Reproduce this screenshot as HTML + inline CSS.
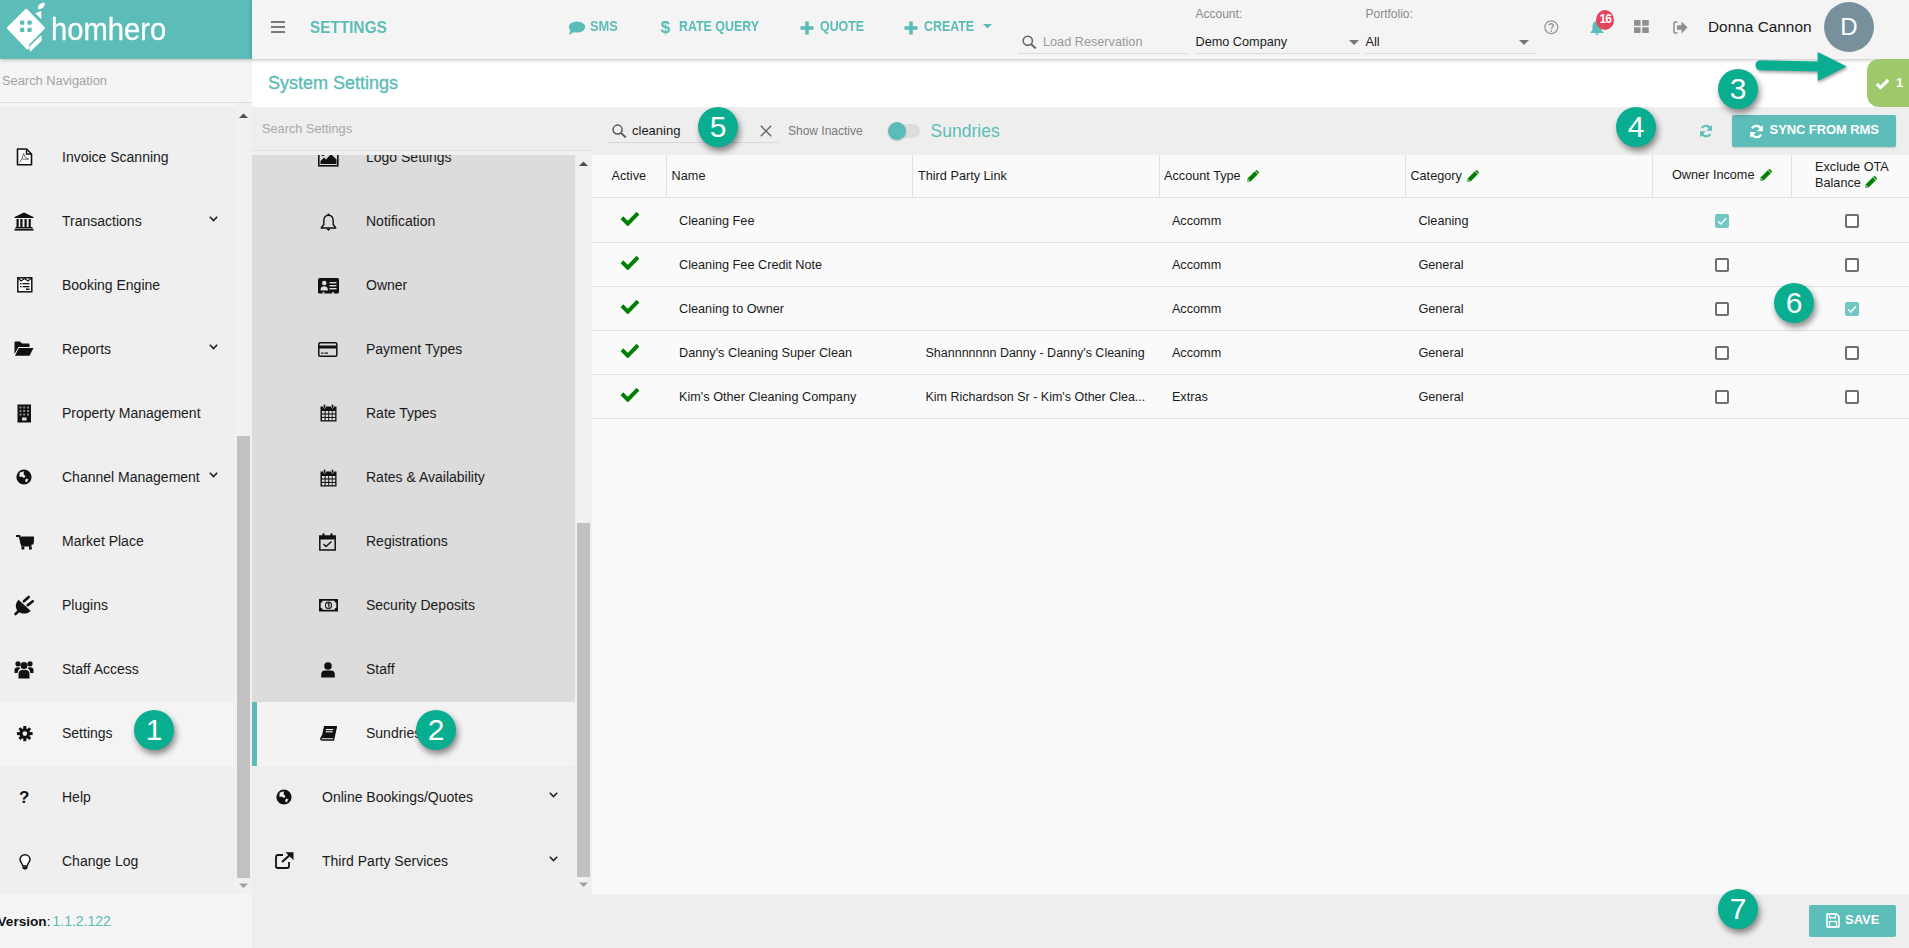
<!DOCTYPE html>
<html><head><meta charset="utf-8">
<style>
*{box-sizing:border-box;margin:0;padding:0}
html,body{width:1909px;height:948px;overflow:hidden;background:#fafafa;font-family:"Liberation Sans",sans-serif;color:#212121}
.a{position:absolute}
.t{position:absolute;white-space:nowrap;line-height:1.15}
svg{position:absolute;display:block}
#logo{left:0;top:0;width:252px;height:59px;background:#5cbcb8;z-index:3;box-shadow:0 1px 4px rgba(0,0,0,.25)}
#topbar{left:252px;top:0;width:1657px;height:59px;background:#f4f4f4;box-shadow:0 1px 4px rgba(0,0,0,.25);z-index:3}
#lsearch{left:0;top:59px;width:252px;height:44px;background:#f5f5f5;border-bottom:1px solid #dedede;z-index:1}
#lnav{left:0;top:103px;width:252px;height:791px;background:#efefef;overflow:hidden}
#lfoot{left:0;top:894px;width:252px;height:54px;background:#f5f5f5}
#phead{left:252px;top:59px;width:1657px;height:48px;background:#fff}
#ssearch{left:252px;top:107px;width:340px;height:44px;background:#eeeeee;border-bottom:1px solid #e0e0e0}
#slist{left:252px;top:151px;width:340px;height:743px;background:#f0f0f0;overflow:hidden}
#toolbar{left:592px;top:107px;width:1317px;height:48px;background:#eeeeee}
#table{left:592px;top:155px;width:1317px;height:739px;background:#fafafa}
#foot{left:252px;top:894px;width:1657px;height:54px;background:#eeeeee}
.nav{position:absolute;left:0;width:235px;height:64px}
.nav .t{left:62px;font-size:14px;top:24px;color:#1a1a1a}
.callout{position:absolute;width:40px;height:40px;border-radius:50%;background:#09ad8f;color:#fff;font-size:30px;text-align:center;line-height:40px;box-shadow:2px 4px 6px rgba(0,0,0,.45);z-index:10}
.tb{top:18.3px;font-size:14.2px;font-weight:700;color:#5cbcb8;transform:scaleX(0.875);transform-origin:0 0}
</style></head><body>
<div id="logo" class="a">
<svg style="left:0;top:0" width="60" height="59" viewBox="0 0 60 59">
<polygon points="8.5,28 26.2,10.3 43.3,28 27.6,44.3 27.6,48" fill="#fff" stroke="#fff" stroke-width="3" stroke-linejoin="round"/>
<rect x="20" y="20.5" width="4.3" height="4.2" rx="1" fill="#5cbcb8"/><rect x="27.4" y="20.5" width="4.3" height="4.2" rx="1" fill="#5cbcb8"/>
<rect x="20" y="27.7" width="4.3" height="4.2" rx="1" fill="#5cbcb8"/><rect x="27.4" y="27.7" width="4.3" height="4.2" rx="1" fill="#5cbcb8"/>
<polygon points="30,47 40.8,36.5 40.8,40.5 30.5,50.5" fill="#fff" stroke="#fff" stroke-width="1.5" stroke-linejoin="round"/>
<path d="M38,9.3 C37.5,5 40,2.8 44.8,2.8 C44.8,7 42.5,9.3 38,9.3Z" fill="#fff"/>
<polygon points="35.3,13.2 41.3,11 41.3,19.3" fill="#fff"/>
</svg>
<div class="t" style="left:51px;top:10.7px;font-size:32px;color:#fff;transform:scaleX(0.912);transform-origin:0 0;-webkit-text-stroke:0.3px #fff">homhero</div>
</div>
<div id="topbar" class="a">
<svg style="left:19px;top:20px" width="14" height="14" viewBox="0 0 14 14"><rect x="0" y="1" width="14" height="2" fill="#7a7a7a"/><rect x="0" y="6" width="14" height="2" fill="#7a7a7a"/><rect x="0" y="11" width="14" height="2" fill="#7a7a7a"/></svg>
<div class="t" style="left:58px;top:17.8px;font-size:16.5px;font-weight:700;color:#5cbcb8;transform:scaleX(0.933);transform-origin:0 0">SETTINGS</div>
<svg style="left:316px;top:21px" width="18" height="15" viewBox="0 0 18 15"><ellipse cx="9" cy="6" rx="8.2" ry="5.6" fill="#5cbcb8"/><path d="M2.5,9 L0.8,14 L7,10.5Z" fill="#5cbcb8"/></svg>
<div class="t tb" style="left:338px;transform:scaleX(0.91)">SMS</div>
<div class="t" style="left:408.5px;top:17.5px;font-size:17px;font-weight:700;color:#5cbcb8">$</div>
<div class="t tb" style="left:426.5px">RATE QUERY</div>
<svg style="left:547.5px;top:21px" width="14" height="14" viewBox="0 0 14 14"><rect x="5.2" y="0.5" width="3.6" height="13" fill="#5cbcb8"/><rect x="0.5" y="5.2" width="13" height="3.6" fill="#5cbcb8"/></svg>
<div class="t tb" style="left:567.5px">QUOTE</div>
<svg style="left:651.5px;top:21px" width="14" height="14" viewBox="0 0 14 14"><rect x="5.2" y="0.5" width="3.6" height="13" fill="#5cbcb8"/><rect x="0.5" y="5.2" width="13" height="3.6" fill="#5cbcb8"/></svg>
<div class="t tb" style="left:672px">CREATE</div>
<svg style="left:731px;top:24px" width="9" height="5" viewBox="0 0 9 5"><polygon points="0,0 9,0 4.5,4.5" fill="#5cbcb8"/></svg>
<svg style="left:770px;top:35px" width="15" height="14" viewBox="0 0 15 14"><circle cx="5.8" cy="5.8" r="4.6" fill="none" stroke="#666" stroke-width="1.6"/><line x1="9.2" y1="9.2" x2="13.8" y2="13.4" stroke="#666" stroke-width="2"/></svg>
<div class="t" style="left:791px;top:35px;font-size:12.7px;color:#999">Load Reservation</div>
<div class="a" style="left:766px;top:53px;width:170px;height:1px;background:#dcdcdc"></div>
<div class="t" style="left:943.5px;top:8px;font-size:12px;color:#8a8a8a">Account:</div>
<div class="t" style="left:943.5px;top:35px;font-size:12.7px;color:#1a1a1a">Demo Company</div>
<svg style="left:1097px;top:40px" width="10" height="5" viewBox="0 0 10 5"><polygon points="0,0 10,0 5,5" fill="#777"/></svg>
<div class="a" style="left:943px;top:53px;width:164px;height:1px;background:#dcdcdc"></div>
<div class="t" style="left:1113.5px;top:8px;font-size:12px;color:#8a8a8a">Portfolio:</div>
<div class="t" style="left:1113.5px;top:35px;font-size:12.7px;color:#1a1a1a">All</div>
<svg style="left:1267px;top:40px" width="10" height="5" viewBox="0 0 10 5"><polygon points="0,0 10,0 5,5" fill="#777"/></svg>
<div class="a" style="left:1113px;top:53px;width:170px;height:1px;background:#dcdcdc"></div>
<svg style="left:1292px;top:20px" width="15" height="15" viewBox="0 0 15 15"><circle cx="7.3" cy="7.2" r="6.4" fill="none" stroke="#9a9a9a" stroke-width="1.3"/><path d="M5.2,5.6 C5.2,3.2 9.4,3.2 9.4,5.6 C9.4,7.2 7.3,7.3 7.3,9" fill="none" stroke="#9a9a9a" stroke-width="1.5"/><circle cx="7.3" cy="11" r="0.9" fill="#9a9a9a"/></svg>
<svg style="left:1337px;top:20px" width="16" height="16" viewBox="0 0 16 16"><path d="M8,1 C11,1 12.5,3.5 12.5,6.5 L12.5,10 L15,13 L1,13 L3.5,10 L3.5,6.5 C3.5,3.5 5,1 8,1Z" fill="#5cbcb8"/><path d="M6,13.5 Q8,16.5 10,13.5Z" fill="#5cbcb8"/></svg>
<div class="a" style="left:1344px;top:10px;width:18px;height:20px;border-radius:50%;background:#e2445c"></div>
<div class="t" style="left:1347.5px;top:13px;font-size:12px;font-weight:700;color:#fff;letter-spacing:-0.8px">16</div>
<svg style="left:1382px;top:20px" width="15" height="13" viewBox="0 0 15 13"><rect x="0" y="0" width="6.6" height="5.8" rx="0.8" fill="#8f8f8f"/><rect x="8.2" y="0" width="6.6" height="5.8" rx="0.8" fill="#8f8f8f"/><rect x="0" y="7.2" width="6.6" height="5.8" rx="0.8" fill="#8f8f8f"/><rect x="8.2" y="7.2" width="6.6" height="5.8" rx="0.8" fill="#8f8f8f"/></svg>
<svg style="left:1420.5px;top:21px" width="15" height="13" viewBox="0 0 15 13"><path d="M4.5,1 L2,1 Q1,1 1,2 L1,11 Q1,12 2,12 L4.5,12" fill="none" stroke="#8f8f8f" stroke-width="1.5"/><path d="M4,4.3 L8.5,4.3 L8.5,0.6 L14.5,6.5 L8.5,12.4 L8.5,8.7 L4,8.7Z" fill="#8f8f8f"/></svg>
<div class="t" style="left:1456px;top:17.8px;font-size:15.4px;color:#1a1a1a">Donna Cannon</div>
<div class="a" style="left:1572px;top:2px;width:50px;height:50px;border-radius:50%;background:#78909c"></div>
<div class="t" style="left:1572px;width:50px;text-align:center;top:13px;font-size:24px;color:#fff">D</div>
</div>
<div id="lsearch" class="a"><div class="t" style="left:2px;font-size:12.85px;color:#a3a3a3;top:14.5px">Search Navigation</div></div>
<div id="lnav" class="a"><div class="a" style="left:0;top:0;width:252px;height:4px;background:#f5f5f5"></div>
<div class="a" style="left:0;top:23px;width:235px;height:64px;"></div>
<svg style="left:16px;top:45px" width="17" height="18" viewBox="0 0 17 18"><path d="M1.5,1 L10.5,1 L15.5,6 L15.5,16.8 L1.5,16.8Z" fill="#fff" stroke="#111" stroke-width="1.6" stroke-linejoin="round"/><path d="M10.5,1 L10.5,6 L15.5,6" fill="none" stroke="#111" stroke-width="1.4"/><path d="M3.5,14.5 Q6.5,11 7.5,5.5 Q8.5,10 12.5,11.2 L6.5,11.2" fill="none" stroke="#444" stroke-width="0.8"/></svg>
<div class="t" style="left:62px;top:46.3px;font-size:14px;color:#1a1a1a">Invoice Scanning</div>
<div class="a" style="left:0;top:87px;width:235px;height:64px;"></div>
<svg style="left:13.5px;top:109px" width="20" height="19" viewBox="0 0 20 19"><polygon points="10,0.5 19.5,5 19.5,6 0.5,6 0.5,5" fill="#111"/><rect x="2.5" y="7" width="2.2" height="8" fill="#111"/><rect x="6.3" y="7" width="2.2" height="8" fill="#111"/><rect x="10.5" y="7" width="2.2" height="8" fill="#111"/><rect x="14.6" y="7" width="2.2" height="8" fill="#111"/><rect x="1.5" y="15" width="17" height="1.3" fill="#111"/><rect x="0.5" y="16.8" width="19" height="1.8" fill="#111"/></svg>
<div class="t" style="left:62px;top:110.3px;font-size:14px;color:#1a1a1a">Transactions</div>
<svg style="left:209px;top:113px" width="9" height="6" viewBox="0 0 9 6"><path d="M0.8,0.8 L4.5,4.6 L8.2,0.8" fill="none" stroke="#222" stroke-width="1.6"/></svg>
<div class="a" style="left:0;top:151px;width:235px;height:64px;"></div>
<svg style="left:16.5px;top:174px" width="16" height="16" viewBox="0 0 16 16"><rect x="0.8" y="0.8" width="14" height="14" fill="#fff" stroke="#111" stroke-width="1.5"/><path d="M1,1 L4,4 L7.5,1.5 L11,4 L14.5,1" fill="none" stroke="#111" stroke-width="1.1"/><rect x="3" y="6" width="1.5" height="1.3" fill="#111"/><rect x="5.5" y="6" width="7" height="1.3" fill="#111"/><rect x="3" y="9" width="1.5" height="1.3" fill="#111"/><rect x="5.5" y="9" width="7" height="1.3" fill="#111"/><rect x="9" y="11.5" width="3.5" height="1.5" fill="#111"/></svg>
<div class="t" style="left:62px;top:174.3px;font-size:14px;color:#1a1a1a">Booking Engine</div>
<div class="a" style="left:0;top:215px;width:235px;height:64px;"></div>
<svg style="left:14px;top:238px" width="20" height="16" viewBox="0 0 20 16"><path d="M0.5,13 L0.5,1.5 Q0.5,0.5 1.5,0.5 L6,0.5 L8,2.5 L14.5,2.5 Q15.5,2.5 15.5,3.5 L15.5,6 L4.5,6 L0.5,13Z" fill="#111"/><path d="M4.8,7 L19.5,7 L15.5,14.8 L1,14.8Z" fill="#111"/></svg>
<div class="t" style="left:62px;top:238.3px;font-size:14px;color:#1a1a1a">Reports</div>
<svg style="left:209px;top:241px" width="9" height="6" viewBox="0 0 9 6"><path d="M0.8,0.8 L4.5,4.6 L8.2,0.8" fill="none" stroke="#222" stroke-width="1.6"/></svg>
<div class="a" style="left:0;top:279px;width:235px;height:64px;"></div>
<svg style="left:16.5px;top:301px" width="15" height="19" viewBox="0 0 15 19"><rect x="0.5" y="0.5" width="13.5" height="18" fill="#111"/><g fill="#888"><rect x="2.5" y="2.5" width="2" height="2"/><rect x="6.2" y="2.5" width="2" height="2"/><rect x="10" y="2.5" width="2" height="2"/><rect x="2.5" y="6" width="2" height="2"/><rect x="6.2" y="6" width="2" height="2"/><rect x="10" y="6" width="2" height="2"/><rect x="2.5" y="9.5" width="2" height="2"/><rect x="6.2" y="9.5" width="2" height="2"/><rect x="10" y="9.5" width="2" height="2"/></g><rect x="5" y="13.5" width="4.5" height="3" fill="#ddd"/></svg>
<div class="t" style="left:62px;top:302.3px;font-size:14px;color:#1a1a1a">Property Management</div>
<div class="a" style="left:0;top:343px;width:235px;height:64px;"></div>
<svg style="left:16px;top:366px" width="16" height="16" viewBox="0 0 16 16"><circle cx="8" cy="8" r="7.6" fill="#111"/><path d="M3.5,4 Q5.5,2 8,2.5 L7.5,5 L9.5,7.5 L8,9 L5.5,7.5 L3.5,8 Z" fill="#eee"/><path d="M10,9.5 L12.5,10.5 L10.5,13.5 L9,12Z" fill="#eee"/></svg>
<div class="t" style="left:62px;top:366.3px;font-size:14px;color:#1a1a1a">Channel Management</div>
<svg style="left:209px;top:369px" width="9" height="6" viewBox="0 0 9 6"><path d="M0.8,0.8 L4.5,4.6 L8.2,0.8" fill="none" stroke="#222" stroke-width="1.6"/></svg>
<div class="a" style="left:0;top:407px;width:235px;height:64px;"></div>
<svg style="left:15.5px;top:432px" width="18" height="15" viewBox="0 0 18 15"><path d="M0,1 L3.5,1 L6,10.5 L15.5,10.5 M5,2.5 L17.5,2.5 L16.5,8.5 L5.5,8.5" fill="none" stroke="#111" stroke-width="1.8"/><rect x="4.5" y="2.5" width="13" height="6" fill="#111"/><rect x="5.5" y="11.5" width="2.8" height="3" fill="#111"/><rect x="13" y="11.5" width="2.8" height="3" fill="#111"/></svg>
<div class="t" style="left:62px;top:430.3px;font-size:14px;color:#1a1a1a">Market Place</div>
<div class="a" style="left:0;top:471px;width:235px;height:64px;"></div>
<svg style="left:10px;top:489px" width="30" height="26" viewBox="0 0 30 26"><path d="M8.5,7.8 L20.8,19 C17.5,22.2 11,22.5 8,19.2 C5,16 5,11.5 8.5,7.8Z" fill="#111"/><path d="M13.9,9.3 L18.8,5" stroke="#111" stroke-width="2.6" stroke-linecap="round"/><path d="M17.6,13.2 L22.8,9.3" stroke="#111" stroke-width="2.6" stroke-linecap="round"/><path d="M9.5,18.2 L5.5,22" stroke="#111" stroke-width="2.6" stroke-linecap="round"/></svg>
<div class="t" style="left:62px;top:494.3px;font-size:14px;color:#1a1a1a">Plugins</div>
<div class="a" style="left:0;top:535px;width:235px;height:64px;"></div>
<svg style="left:14px;top:557px" width="20" height="19" viewBox="0 0 20 19"><circle cx="10" cy="5.5" r="3.5" fill="#111"/><circle cx="4" cy="3.8" r="2.6" fill="#111"/><circle cx="16" cy="3.8" r="2.6" fill="#111"/><path d="M4.5,18.5 L4.5,14 Q4.5,9.8 10,9.8 Q15.5,9.8 15.5,14 L15.5,18.5Z" fill="#111"/><path d="M0.5,13 L0.5,10 Q0.5,7.2 4,7.2 Q5.5,7.2 6.5,8 Q3.8,9.5 3.6,13Z" fill="#111"/><path d="M19.5,13 L19.5,10 Q19.5,7.2 16,7.2 Q14.5,7.2 13.5,8 Q16.2,9.5 16.4,13Z" fill="#111"/></svg>
<div class="t" style="left:62px;top:558.3px;font-size:14px;color:#1a1a1a">Staff Access</div>
<div class="a" style="left:0;top:599px;width:235px;height:64px;background:#f4f4f4;"></div>
<svg style="left:16.5px;top:623px" width="16" height="16" viewBox="0 0 16 16"><g fill="#111"><circle cx="7.8" cy="7.6" r="5.3"/><rect x="6.3" y="0" width="3" height="15.2"/><rect x="0" y="6.1" width="15.6" height="3"/><rect x="6.3" y="0" width="3" height="15.2" transform="rotate(45 7.8 7.6)"/><rect x="6.3" y="0" width="3" height="15.2" transform="rotate(-45 7.8 7.6)"/></g><circle cx="7.8" cy="7.6" r="2.3" fill="#f4f4f4"/></svg>
<div class="t" style="left:62px;top:622.3px;font-size:14px;color:#1a1a1a">Settings</div>
<div class="a" style="left:0;top:663px;width:235px;height:64px;"></div>
<div class="t" style="left:19px;top:685px;font-size:17px;font-weight:700;color:#111">?</div>
<div class="t" style="left:62px;top:686.3px;font-size:14px;color:#1a1a1a">Help</div>
<div class="a" style="left:0;top:727px;width:235px;height:64px;"></div>
<svg style="left:18.5px;top:751px" width="12" height="17" viewBox="0 0 12 17"><path d="M6,0.8 C9,0.8 11,3 11,5.5 C11,8 8.5,9.5 8.2,12 L3.8,12 C3.5,9.5 1,8 1,5.5 C1,3 3,0.8 6,0.8Z" fill="#fff" stroke="#111" stroke-width="1.5"/><path d="M3.5,12.8 L8.5,12.8 L8.5,14.5 Q6,16.8 3.5,14.5Z" fill="#111"/></svg>
<div class="t" style="left:62px;top:750.3px;font-size:14px;color:#1a1a1a">Change Log</div>
<div class="a" style="left:235px;top:0;width:17px;height:790px;background:#f1f1f1"></div>
<div class="a" style="left:237px;top:333px;width:13px;height:442px;background:#c1c1c1"></div>
<svg style="left:239px;top:10px" width="9" height="6" viewBox="0 0 9 6"><polygon points="0,5 9,5 4.5,0.5" fill="#505050"/></svg>
<svg style="left:239px;top:780px" width="9" height="6" viewBox="0 0 9 6"><polygon points="0,0.5 9,0.5 4.5,5" fill="#a0a0a0"/></svg>
</div>
<div id="lfoot" class="a"><div class="t" style="left:-2.5px;top:19.8px;font-size:13.6px;font-weight:700;color:#111">Version<span style="font-weight:400">:</span></div><div class="t" style="left:52.5px;top:19.4px;font-size:14px;color:#5cbcb8">1.1.2.122</div></div>
<div id="phead" class="a"><div class="t" style="left:16px;top:14.2px;font-size:18px;color:#5cbcb8;-webkit-text-stroke:0.35px #5cbcb8">System Settings</div></div>
<div id="ssearch" class="a"><div class="t" style="left:10px;top:14.5px;font-size:12.75px;color:#a8a8a8">Search Settings</div></div>
<div id="slist" class="a"><div class="a" style="left:0;top:4px;width:340px;height:738px;overflow:hidden">
<div class="a" style="left:0;top:0;width:323px;height:547px;background:#dcdcdc"></div>
<div class="a" style="left:0;top:547px;width:323px;height:64px;background:#f3f3f3"></div>
<div class="a" style="left:0;top:547px;width:5px;height:64px;background:#5cbcb8"></div>
<div class="a" style="left:0;top:611px;width:323px;height:128px;background:#eeeeee"></div>
<svg style="left:66.0px;top:-5.5px" width="21" height="17" viewBox="0 0 21 17"><rect x="0.8" y="0.8" width="19" height="15" fill="none" stroke="#111" stroke-width="1.6"/><path d="M2.5,14 L2.5,11 L6,7.5 L8,9.5 L13,4 L18.5,9.5 L18.5,14Z" fill="#111"/><circle cx="5" cy="4.5" r="1.6" fill="#111"/></svg>
<div class="t" style="left:114px;top:-5.9px;font-size:14px;color:#1a1a1a">Logo Settings</div>
<svg style="left:67.5px;top:57.5px" width="17" height="19" viewBox="0 0 17 19"><path d="M8.5,2.2 C12,2.2 13.2,5 13.2,8 L13.2,11.5 L15.8,15 L1.2,15 L3.8,11.5 L3.8,8 C3.8,5 5,2.2 8.5,2.2Z" fill="none" stroke="#111" stroke-width="1.4" stroke-linejoin="round"/><circle cx="8.5" cy="1.5" r="1.1" fill="#111"/><path d="M6.8,16 Q8.5,18.5 10.2,16" fill="#111" stroke="#111" stroke-width="1"/></svg>
<div class="t" style="left:114px;top:58.1px;font-size:14px;color:#1a1a1a">Notification</div>
<svg style="left:65.5px;top:123.0px" width="21" height="16" viewBox="0 0 21 16"><rect x="0" y="0" width="21" height="15.5" rx="1.5" fill="#111"/><circle cx="6.2" cy="5" r="2.3" fill="#ddd"/><path d="M2.5,12.5 Q2.5,8.3 6.2,8.3 Q9.9,8.3 9.9,12.5Z" fill="#ddd"/><rect x="11.5" y="4" width="7" height="1.4" fill="#ddd"/><rect x="11.5" y="7" width="7" height="1.4" fill="#ddd"/><rect x="11.5" y="10" width="7" height="1.4" fill="#ddd"/><rect x="4.5" y="14.2" width="2" height="1.5" fill="#ddd"/><rect x="14" y="14.2" width="2" height="1.5" fill="#ddd"/></svg>
<div class="t" style="left:114px;top:122.1px;font-size:14px;color:#1a1a1a">Owner</div>
<svg style="left:66.4px;top:187.0px" width="20" height="15" viewBox="0 0 20 15"><rect x="0.8" y="0.8" width="18" height="13.4" rx="1.2" fill="none" stroke="#111" stroke-width="1.5"/><rect x="0.8" y="3.5" width="18" height="3" fill="#111"/><rect x="3" y="10.5" width="2.5" height="1.2" fill="#111"/><rect x="6.5" y="10.5" width="3.5" height="1.2" fill="#111"/></svg>
<div class="t" style="left:114px;top:186.1px;font-size:14px;color:#1a1a1a">Payment Types</div>
<svg style="left:67.5px;top:249.3px" width="17" height="18" viewBox="0 0 17 18"><rect x="0.5" y="2.5" width="16" height="15" fill="#111"/><rect x="3.5" y="0.3" width="2" height="4" rx="1" fill="#111" stroke="#ddd" stroke-width="0.6"/><rect x="11.5" y="0.3" width="2" height="4" rx="1" fill="#111" stroke="#ddd" stroke-width="0.6"/><g fill="#ddd"><rect x="2" y="7" width="2.6" height="2.4"/><rect x="5.6" y="7" width="2.6" height="2.4"/><rect x="9.2" y="7" width="2.6" height="2.4"/><rect x="12.6" y="7" width="2.6" height="2.4"/><rect x="2" y="10.5" width="2.6" height="2.4"/><rect x="5.6" y="10.5" width="2.6" height="2.4"/><rect x="9.2" y="10.5" width="2.6" height="2.4"/><rect x="12.6" y="10.5" width="2.6" height="2.4"/><rect x="2" y="14" width="2.6" height="2.2"/><rect x="5.6" y="14" width="2.6" height="2.2"/><rect x="9.2" y="14" width="2.6" height="2.2"/><rect x="12.6" y="14" width="2.6" height="2.2"/></g></svg>
<div class="t" style="left:114px;top:250.1px;font-size:14px;color:#1a1a1a">Rate Types</div>
<svg style="left:67.5px;top:314.0px" width="17" height="18" viewBox="0 0 17 18"><rect x="0.5" y="2.5" width="16" height="15" fill="#111"/><rect x="3.5" y="0.3" width="2" height="4" rx="1" fill="#111" stroke="#ddd" stroke-width="0.6"/><rect x="11.5" y="0.3" width="2" height="4" rx="1" fill="#111" stroke="#ddd" stroke-width="0.6"/><g fill="#ddd"><rect x="2" y="7" width="2.6" height="2.4"/><rect x="5.6" y="7" width="2.6" height="2.4"/><rect x="9.2" y="7" width="2.6" height="2.4"/><rect x="12.6" y="7" width="2.6" height="2.4"/><rect x="2" y="10.5" width="2.6" height="2.4"/><rect x="5.6" y="10.5" width="2.6" height="2.4"/><rect x="9.2" y="10.5" width="2.6" height="2.4"/><rect x="12.6" y="10.5" width="2.6" height="2.4"/><rect x="2" y="14" width="2.6" height="2.2"/><rect x="5.6" y="14" width="2.6" height="2.2"/><rect x="9.2" y="14" width="2.6" height="2.2"/><rect x="12.6" y="14" width="2.6" height="2.2"/></g></svg>
<div class="t" style="left:114px;top:314.1px;font-size:14px;color:#1a1a1a">Rates &amp; Availability</div>
<svg style="left:67.4px;top:378.0px" width="17" height="18" viewBox="0 0 17 18"><rect x="0.8" y="3" width="15.4" height="14" fill="none" stroke="#111" stroke-width="1.5"/><rect x="0.8" y="3" width="15.4" height="3.5" fill="#111"/><rect x="3.5" y="0.3" width="2" height="4" rx="1" fill="#111"/><rect x="11.5" y="0.3" width="2" height="4" rx="1" fill="#111"/><path d="M4.5,11 L7,13.5 L12.5,8.5" fill="none" stroke="#111" stroke-width="1.4"/></svg>
<div class="t" style="left:114px;top:378.1px;font-size:14px;color:#1a1a1a">Registrations</div>
<svg style="left:66.5px;top:444.4px" width="19" height="13" viewBox="0 0 19 13"><rect x="0" y="0" width="19" height="12.5" fill="#111"/><path d="M3.5,1.8 L15.5,1.8 Q15.5,3.8 17.3,3.8 L17.3,8.7 Q15.5,8.7 15.5,10.7 L3.5,10.7 Q3.5,8.7 1.7,8.7 L1.7,3.8 Q3.5,3.8 3.5,1.8Z" fill="#ddd"/><ellipse cx="9.5" cy="6.25" rx="3" ry="3.3" fill="#ddd" stroke="#111" stroke-width="1.1"/><path d="M8.6,4.6 L9.9,3.9 L9.9,8.6" fill="none" stroke="#111" stroke-width="1.2"/></svg>
<div class="t" style="left:114px;top:442.1px;font-size:14px;color:#1a1a1a">Security Deposits</div>
<svg style="left:69.0px;top:506.6px" width="14" height="16" viewBox="0 0 14 16"><circle cx="7" cy="4" r="3.8" fill="#111"/><path d="M0.2,15.5 L0.2,12.5 Q0.2,8.5 4,8.5 L10,8.5 Q13.8,8.5 13.8,12.5 L13.8,15.5Z" fill="#111"/></svg>
<div class="t" style="left:114px;top:506.1px;font-size:14px;color:#1a1a1a">Staff</div>
<svg style="left:67.5px;top:571.4px" width="17" height="15" viewBox="0 0 17 15"><path d="M4,0.3 L16.5,0.3 L14,11.5 L2,11.5 Q0.8,11.5 0.6,12.8 Q0.8,14 2,14 L13.5,14 L15.5,4" fill="none" stroke="#111" stroke-width="1.3"/><path d="M4,0.3 L16.5,0.3 L14,11.5 L1.5,11.5 Z" fill="#111"/><path d="M0.8,12.5 L1.6,9 L2.5,11.5Z" fill="#111"/><rect x="6" y="3" width="7" height="1.1" fill="#f3f3f3"/><rect x="5.6" y="5.2" width="7" height="1.1" fill="#f3f3f3"/></svg>
<div class="t" style="left:114px;top:570.1px;font-size:14px;color:#1a1a1a">Sundries</div>
<svg style="left:24.0px;top:634.4px" width="16" height="16" viewBox="0 0 16 16"><circle cx="8" cy="8" r="7.6" fill="#111"/><path d="M3.5,4 Q5.5,2 8,2.5 L7.5,5 L9.5,7.5 L8,9 L5.5,7.5 L3.5,8 Z" fill="#eee"/><path d="M10,9.5 L12.5,10.5 L10.5,13.5 L9,12Z" fill="#eee"/></svg>
<div class="t" style="left:70px;top:634.1px;font-size:14px;color:#1a1a1a">Online Bookings/Quotes</div>
<svg style="left:297px;top:637px" width="9" height="6" viewBox="0 0 9 6"><path d="M0.8,0.8 L4.5,4.6 L8.2,0.8" fill="none" stroke="#222" stroke-width="1.6"/></svg>
<svg style="left:22.5px;top:697.4px" width="19" height="17" viewBox="0 0 19 17"><path d="M8,3 L3,3 Q1,3 1,5 L1,14 Q1,16 3,16 L12,16 Q14,16 14,14 L14,10" fill="none" stroke="#111" stroke-width="1.8"/><path d="M7,10 L16.5,1.5" stroke="#111" stroke-width="2"/><polygon points="10.5,0.3 18.5,0.3 18.5,8.3" fill="#111"/></svg>
<div class="t" style="left:70px;top:698.1px;font-size:14px;color:#1a1a1a">Third Party Services</div>
<svg style="left:297px;top:701px" width="9" height="6" viewBox="0 0 9 6"><path d="M0.8,0.8 L4.5,4.6 L8.2,0.8" fill="none" stroke="#222" stroke-width="1.6"/></svg>
<div class="a" style="left:323px;top:0;width:17px;height:738px;background:#f0f0f0"></div>
<div class="a" style="left:325px;top:368px;width:13px;height:354px;background:#c1c1c1"></div>
<svg style="left:327px;top:6px" width="9" height="6" viewBox="0 0 9 6"><polygon points="0,5 9,5 4.5,0.5" fill="#505050"/></svg>
<svg style="left:327px;top:727px" width="9" height="6" viewBox="0 0 9 6"><polygon points="0,0.5 9,0.5 4.5,5" fill="#a0a0a0"/></svg>
</div></div>
<div id="toolbar" class="a">
<svg style="left:20px;top:17px" width="15" height="14" viewBox="0 0 15 14"><circle cx="5.6" cy="5.6" r="4.5" fill="none" stroke="#555" stroke-width="1.5"/><line x1="8.9" y1="8.9" x2="13.8" y2="13.4" stroke="#555" stroke-width="1.9"/></svg>
<div class="t" style="left:40.0px;top:17.4px;font-size:13px;color:#1a1a1a;">cleaning</div>
<div class="a" style="left:16px;top:35px;width:170px;height:1px;background:#d8d8d8"></div>
<svg style="left:168px;top:18px" width="12" height="12" viewBox="0 0 12 12"><path d="M0.8,0.8 L11.2,11.2 M11.2,0.8 L0.8,11.2" stroke="#666" stroke-width="1.4"/></svg>
<div class="t" style="left:196.0px;top:18.0px;font-size:12px;color:#7a7a7a;">Show Inactive</div>
<div class="a" style="left:298px;top:17px;width:30px;height:14px;border-radius:7px;background:#dcdcdc"></div>
<div class="a" style="left:296px;top:15px;width:18px;height:18px;border-radius:50%;background:#5cbcb8;box-shadow:0 1px 2px rgba(0,0,0,.2)"></div>
<div class="t" style="left:338.6px;top:13.9px;font-size:17.5px;color:#5cbcb8;">Sundries</div>
<svg style="left:1107px;top:17px" width="14" height="14" viewBox="0 0 16 16"><path d="M13.2,6.2 A5.6,5.6 0 0 0 3,4.6" fill="none" stroke="#5cbcb8" stroke-width="2.3"/><polygon points="14.8,1 14.8,7.6 8.4,7.6" fill="#5cbcb8"/><path d="M2.8,9.8 A5.6,5.6 0 0 0 13,11.4" fill="none" stroke="#5cbcb8" stroke-width="2.3"/><polygon points="1.2,15 1.2,8.4 7.6,8.4" fill="#5cbcb8"/></svg>
<div class="a" style="left:1140px;top:8px;width:164px;height:32px;border-radius:2px;background:#5dbdb9;box-shadow:0 1px 2px rgba(0,0,0,.15)"></div>
<svg style="left:1156.5px;top:16.5px" width="15" height="15" viewBox="0 0 16 16"><path d="M13.2,6.2 A5.6,5.6 0 0 0 3,4.6" fill="none" stroke="#fff" stroke-width="2.3"/><polygon points="14.8,1 14.8,7.6 8.4,7.6" fill="#fff"/><path d="M2.8,9.8 A5.6,5.6 0 0 0 13,11.4" fill="none" stroke="#fff" stroke-width="2.3"/><polygon points="1.2,15 1.2,8.4 7.6,8.4" fill="#fff"/></svg>
<div class="t" style="left:1177.6px;top:15.6px;font-size:13px;color:#fff;font-weight:700;letter-spacing:-0.1px">SYNC FROM RMS</div>
</div>
<div id="table" class="a">
<div class="a" style="left:0;top:42px;width:1317px;height:1px;background:#e0e0e0"></div>
<div class="a" style="left:74px;top:0;width:1px;height:42px;background:#e3e3e3"></div>
<div class="a" style="left:320px;top:0;width:1px;height:42px;background:#e3e3e3"></div>
<div class="a" style="left:567px;top:0;width:1px;height:42px;background:#e3e3e3"></div>
<div class="a" style="left:813px;top:0;width:1px;height:42px;background:#e3e3e3"></div>
<div class="a" style="left:1060px;top:0;width:1px;height:42px;background:#e3e3e3"></div>
<div class="a" style="left:1199px;top:0;width:1px;height:42px;background:#e3e3e3"></div>
<div class="t" style="left:19.5px;top:13.8px;font-size:12.7px;color:#1a1a1a;">Active</div>
<div class="t" style="left:79.6px;top:13.8px;font-size:12.7px;color:#1a1a1a;">Name</div>
<div class="t" style="left:326.0px;top:13.8px;font-size:12.7px;color:#1a1a1a;">Third Party Link</div>
<div class="t" style="left:572.0px;top:13.8px;font-size:12.7px;color:#1a1a1a;">Account Type</div>
<svg style="left:655px;top:14.800000000000011px" width="12" height="12" viewBox="0 0 12 12"><path d="M0.3,11.7 L0.8,8.2 L7.8,1.2 L10.8,4.2 L3.8,11.2Z" fill="#008000"/><path d="M8.6,0.4 Q9.4,-0.3 10.2,0.4 L11.6,1.8 Q12.3,2.6 11.6,3.4 L11.2,3.8 L8.2,0.8Z" fill="#008000"/><path d="M1,10.8 L1.3,9 L3,10.7Z" fill="#fff" opacity=".8"/></svg>
<div class="t" style="left:818.4px;top:13.8px;font-size:12.7px;color:#1a1a1a;">Category</div>
<svg style="left:875px;top:14.800000000000011px" width="12" height="12" viewBox="0 0 12 12"><path d="M0.3,11.7 L0.8,8.2 L7.8,1.2 L10.8,4.2 L3.8,11.2Z" fill="#008000"/><path d="M8.6,0.4 Q9.4,-0.3 10.2,0.4 L11.6,1.8 Q12.3,2.6 11.6,3.4 L11.2,3.8 L8.2,0.8Z" fill="#008000"/><path d="M1,10.8 L1.3,9 L3,10.7Z" fill="#fff" opacity=".8"/></svg>
<div class="t" style="left:1080.0px;top:13.3px;font-size:12.7px;color:#1a1a1a;">Owner Income</div>
<svg style="left:1168px;top:13.5px" width="12" height="12" viewBox="0 0 12 12"><path d="M0.3,11.7 L0.8,8.2 L7.8,1.2 L10.8,4.2 L3.8,11.2Z" fill="#008000"/><path d="M8.6,0.4 Q9.4,-0.3 10.2,0.4 L11.6,1.8 Q12.3,2.6 11.6,3.4 L11.2,3.8 L8.2,0.8Z" fill="#008000"/><path d="M1,10.8 L1.3,9 L3,10.7Z" fill="#fff" opacity=".8"/></svg>
<div class="t" style="left:1223.0px;top:4.8px;font-size:12.7px;color:#1a1a1a;">Exclude OTA</div>
<div class="t" style="left:1223.0px;top:20.8px;font-size:12.7px;color:#1a1a1a;">Balance</div>
<svg style="left:1273px;top:21px" width="12" height="12" viewBox="0 0 12 12"><path d="M0.3,11.7 L0.8,8.2 L7.8,1.2 L10.8,4.2 L3.8,11.2Z" fill="#008000"/><path d="M8.6,0.4 Q9.4,-0.3 10.2,0.4 L11.6,1.8 Q12.3,2.6 11.6,3.4 L11.2,3.8 L8.2,0.8Z" fill="#008000"/><path d="M1,10.8 L1.3,9 L3,10.7Z" fill="#fff" opacity=".8"/></svg>
<div class="a" style="left:0;top:87px;width:1317px;height:1px;background:#e0e0e0"></div>
<svg style="left:28.5px;top:57px" width="18" height="14" viewBox="0 0 18 14"><path d="M2.3,7.2 L6.8,11.6 L15.6,2.6" fill="none" stroke="#008000" stroke-width="4" stroke-linejoin="miter" stroke-linecap="square"/></svg>
<div class="t" style="left:87.0px;top:59.0px;font-size:12.7px;color:#1a1a1a;">Cleaning Fee</div>
<div class="t" style="left:579.9px;top:59.0px;font-size:12.7px;color:#1a1a1a;">Accomm</div>
<div class="t" style="left:826.4px;top:59.0px;font-size:12.7px;color:#1a1a1a;">Cleaning</div>
<div class="a" style="left:1123px;top:59px;width:14px;height:14px;border-radius:2px;background:#70c7c3"></div><svg style="left:1123px;top:59px" width="14" height="14" viewBox="0 0 14 14"><path d="M3,7.2 L5.8,10 L11.2,4.2" fill="none" stroke="#fff" stroke-width="1.4"/></svg>
<div class="a" style="left:1253px;top:59px;width:14px;height:14px;border:2px solid #6f6f6f;border-radius:2px;background:#fff"></div>
<div class="a" style="left:0;top:131px;width:1317px;height:1px;background:#e0e0e0"></div>
<svg style="left:28.5px;top:101px" width="18" height="14" viewBox="0 0 18 14"><path d="M2.3,7.2 L6.8,11.6 L15.6,2.6" fill="none" stroke="#008000" stroke-width="4" stroke-linejoin="miter" stroke-linecap="square"/></svg>
<div class="t" style="left:87.0px;top:103.0px;font-size:12.7px;color:#1a1a1a;">Cleaning Fee Credit Note</div>
<div class="t" style="left:579.9px;top:103.0px;font-size:12.7px;color:#1a1a1a;">Accomm</div>
<div class="t" style="left:826.4px;top:103.0px;font-size:12.7px;color:#1a1a1a;">General</div>
<div class="a" style="left:1123px;top:103px;width:14px;height:14px;border:2px solid #6f6f6f;border-radius:2px;background:#fff"></div>
<div class="a" style="left:1253px;top:103px;width:14px;height:14px;border:2px solid #6f6f6f;border-radius:2px;background:#fff"></div>
<div class="a" style="left:0;top:175px;width:1317px;height:1px;background:#e0e0e0"></div>
<svg style="left:28.5px;top:145px" width="18" height="14" viewBox="0 0 18 14"><path d="M2.3,7.2 L6.8,11.6 L15.6,2.6" fill="none" stroke="#008000" stroke-width="4" stroke-linejoin="miter" stroke-linecap="square"/></svg>
<div class="t" style="left:87.0px;top:147.0px;font-size:12.7px;color:#1a1a1a;">Cleaning to Owner</div>
<div class="t" style="left:579.9px;top:147.0px;font-size:12.7px;color:#1a1a1a;">Accomm</div>
<div class="t" style="left:826.4px;top:147.0px;font-size:12.7px;color:#1a1a1a;">General</div>
<div class="a" style="left:1123px;top:147px;width:14px;height:14px;border:2px solid #6f6f6f;border-radius:2px;background:#fff"></div>
<div class="a" style="left:1253px;top:147px;width:14px;height:14px;border-radius:2px;background:#70c7c3"></div><svg style="left:1253px;top:147px" width="14" height="14" viewBox="0 0 14 14"><path d="M3,7.2 L5.8,10 L11.2,4.2" fill="none" stroke="#fff" stroke-width="1.4"/></svg>
<div class="a" style="left:0;top:219px;width:1317px;height:1px;background:#e0e0e0"></div>
<svg style="left:28.5px;top:189px" width="18" height="14" viewBox="0 0 18 14"><path d="M2.3,7.2 L6.8,11.6 L15.6,2.6" fill="none" stroke="#008000" stroke-width="4" stroke-linejoin="miter" stroke-linecap="square"/></svg>
<div class="t" style="left:87.0px;top:191.0px;font-size:12.7px;color:#1a1a1a;">Danny&#39;s Cleaning Super Clean</div>
<div class="t" style="left:333.5px;top:191.2px;font-size:12.5px;color:#1a1a1a;">Shannnnnnn Danny - Danny&#39;s Cleaning</div>
<div class="t" style="left:579.9px;top:191.0px;font-size:12.7px;color:#1a1a1a;">Accomm</div>
<div class="t" style="left:826.4px;top:191.0px;font-size:12.7px;color:#1a1a1a;">General</div>
<div class="a" style="left:1123px;top:191px;width:14px;height:14px;border:2px solid #6f6f6f;border-radius:2px;background:#fff"></div>
<div class="a" style="left:1253px;top:191px;width:14px;height:14px;border:2px solid #6f6f6f;border-radius:2px;background:#fff"></div>
<div class="a" style="left:0;top:263px;width:1317px;height:1px;background:#e0e0e0"></div>
<svg style="left:28.5px;top:233px" width="18" height="14" viewBox="0 0 18 14"><path d="M2.3,7.2 L6.8,11.6 L15.6,2.6" fill="none" stroke="#008000" stroke-width="4" stroke-linejoin="miter" stroke-linecap="square"/></svg>
<div class="t" style="left:87.0px;top:235.0px;font-size:12.7px;color:#1a1a1a;">Kim&#39;s Other Cleaning Company</div>
<div class="t" style="left:333.5px;top:235.2px;font-size:12.5px;color:#1a1a1a;">Kim Richardson Sr - Kim&#39;s Other Clea...</div>
<div class="t" style="left:579.9px;top:235.0px;font-size:12.7px;color:#1a1a1a;">Extras</div>
<div class="t" style="left:826.4px;top:235.0px;font-size:12.7px;color:#1a1a1a;">General</div>
<div class="a" style="left:1123px;top:235px;width:14px;height:14px;border:2px solid #6f6f6f;border-radius:2px;background:#fff"></div>
<div class="a" style="left:1253px;top:235px;width:14px;height:14px;border:2px solid #6f6f6f;border-radius:2px;background:#fff"></div>
</div>
<div id="foot" class="a">
<div class="a" style="left:1557px;top:11px;width:87px;height:32px;border-radius:2px;background:#5dbdb9"></div>
<svg style="left:1574px;top:19px" width="14" height="15" viewBox="0 0 14 15"><path d="M1,1 L10.5,1 L13,3.5 L13,14 L1,14Z" fill="none" stroke="#fff" stroke-width="1.6" stroke-linejoin="round"/><rect x="3.5" y="1" width="6" height="3.8" fill="none" stroke="#fff" stroke-width="1.3"/><rect x="3.5" y="8.5" width="7" height="5.5" fill="none" stroke="#fff" stroke-width="1.3"/></svg>
<div class="t" style="left:1593px;top:19.0px;font-size:13px;font-weight:700;color:#fff">SAVE</div>
</div>
<div class="callout" style="left:134px;top:710px">1</div>
<div class="callout" style="left:416px;top:710px">2</div>
<div class="callout" style="left:1718px;top:69px">3</div>
<div class="callout" style="left:1616px;top:107px">4</div>
<div class="callout" style="left:698px;top:107px">5</div>
<div class="callout" style="left:1774px;top:283px">6</div>
<div class="callout" style="left:1718px;top:889px">7</div>
<div class="a" style="left:1867px;top:59px;width:42px;height:48px;border-radius:12px 0 0 12px;background:#9dc96b;z-index:4"></div>
<svg style="left:1875px;top:78px;z-index:5" width="15" height="12" viewBox="0 0 15 12"><path d="M1.8,6 L5.5,9.6 L13.2,2" fill="none" stroke="#fff" stroke-width="3.2"/></svg>
<div class="t" style="left:1896px;top:76px;font-size:13px;font-weight:700;color:#fff;z-index:5">1</div>
<svg style="left:1750px;top:48px;z-index:6;overflow:visible" width="100" height="40" viewBox="0 0 100 40"><g style="filter:drop-shadow(1px 2px 1.5px rgba(0,0,0,.35))"><path d="M10.5,17.2 L70,18.4" stroke="#09ad8f" stroke-width="10" stroke-linecap="round"/><polygon points="67.7,4 96.8,18.6 67.7,33" fill="#09ad8f"/></g></svg>
</body></html>
